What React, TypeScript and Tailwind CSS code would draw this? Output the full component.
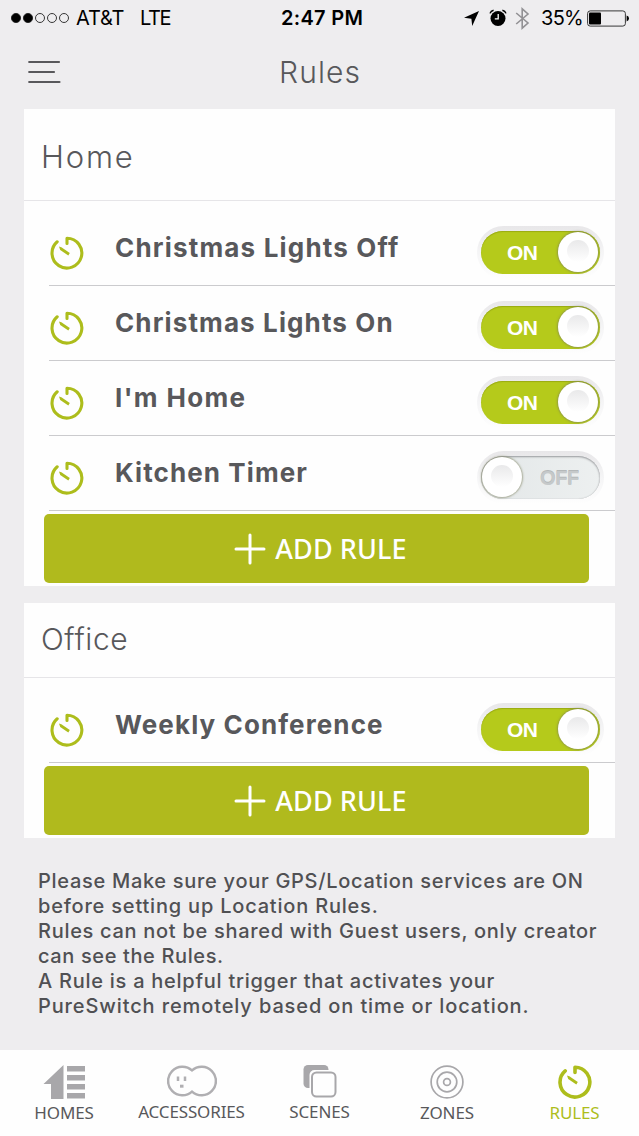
import type { ReactNode } from 'react'

const homeRules = [
  { name: 'Christmas Lights Off', on: true, spacing: 'tracking-[1.18px]' },
  { name: 'Christmas Lights On', on: true, spacing: 'tracking-[1.12px]' },
  { name: "I'm Home", on: true, spacing: 'tracking-[1.35px]' },
  { name: 'Kitchen Timer', on: false, spacing: 'tracking-[1.1px]' },
]

const officeRules = [
  { name: 'Weekly Conference', on: true, spacing: 'tracking-[1.1px]' },
]

const notes = [
  { text: 'Please Make sure your GPS/Location services are ON', spacing: 'tracking-[0.7px]' },
  { text: 'before setting up Location Rules.', spacing: 'tracking-[0.8px]' },
  { text: 'Rules can not be shared with Guest users, only creator', spacing: 'tracking-[0.7px]' },
  { text: 'can see the Rules.', spacing: 'tracking-[0.62px]' },
  { text: 'A Rule is a helpful trigger that activates your', spacing: 'tracking-[0.74px]' },
  { text: 'PureSwitch remotely based on time or location.', spacing: 'tracking-[0.88px]' },
]

function TimerIcon({ strokeWidth = 3.1 }: { strokeWidth?: number }) {
  return (
    <svg width="34" height="34" viewBox="0 0 34 34" fill="none" stroke="#adbd1c" strokeWidth={strokeWidth}>
      <path d="M17 7.4V2.2A14.9 14.9 0 1 1 7.2 5.8" strokeLinejoin="round" strokeLinecap="round" />
      <path d="M9 10.4L11.4 11.2L19.8 17.1L18.3 19.6L10.2 14Z" fill="#adbd1c" stroke="none" />
    </svg>
  )
}

function StatusBar() {
  return (
    <div className="grid h-9 grid-cols-[281px_83px_1fr] items-center font-[Inter] text-[20px] text-black">
      <div className="flex items-center pl-[11px]">
        <svg width="59" height="12" viewBox="0 0 59 12" fill="none" stroke="#222" strokeWidth="0.9">
          <circle cx="5" cy="6" r="4.6" fill="#000" />
          <circle cx="17" cy="6" r="4.6" fill="#000" />
          <circle cx="29" cy="6" r="4.5" />
          <circle cx="41" cy="6" r="4.5" />
          <circle cx="53" cy="6" r="4.5" />
        </svg>
        <span className="ml-1.5 w-16 tracking-[-0.2px] whitespace-nowrap">AT&amp;T</span>
        <span className="tracking-[-1.4px]">LTE</span>
      </div>
      <span className="font-semibold tracking-[0.3px] whitespace-nowrap">2:47 PM</span>
      <div className="flex items-center pl-[99px]">
        <svg width="17" height="17" viewBox="0 0 17 17">
          <path d="M16 1L9.2 16L8.4 8.7L1 7.8Z" fill="#000" />
        </svg>
        <svg className="ml-[9px]" width="18" height="18" viewBox="0 0 18 18">
          <circle cx="9" cy="9.5" r="7.5" fill="#000" />
          <path d="M1 4.4Q1.8 1.8 4.6 1.2M13.4 1.2Q16.2 1.8 17 4.4" fill="none" stroke="#000" strokeWidth="1.4" />
          <path d="M9.2 5V9.8H5.8" fill="none" stroke="#fff" strokeWidth="1.3" />
        </svg>
        <svg className="ml-2" width="15" height="23" viewBox="0 0 15 23" fill="none" stroke="#929194" strokeWidth="1.6">
          <path d="M1.2 6L13 16L7.2 21.2V1.8L13 7L1.2 17" />
        </svg>
        <span className="ml-[11px] w-[46px] tracking-[-0.7px]">35%</span>
        <svg width="42" height="17" viewBox="0 0 42 17">
          <rect x="0.6" y="0.9" width="37.8" height="15.2" rx="2.6" fill="none" stroke="#222" strokeWidth="0.9" />
          <rect x="2" y="2.4" width="12" height="12.2" rx="1" fill="#000" />
          <path d="M39.6 5.6Q42 6.2 42 8.5T39.6 11.4Z" fill="#000" />
        </svg>
      </div>
    </div>
  )
}

function Toggle({ on }: { on: boolean }) {
  return (
    <div className="h-[53px] w-[127px] rounded-full bg-gradient-to-b from-[#e8e7e9] via-[#f5f5f6] to-[#fefefe] p-1 pt-[5px]">
      <div
        className={
          on
            ? 'flex h-[43px] items-center justify-between rounded-full bg-[#b5ca1b] pr-[2px] pl-[26px] shadow-[inset_0_1px_1px_#99ab12]'
            : 'flex h-[43px] flex-row-reverse items-center justify-between rounded-full bg-gradient-to-r from-[#e3e7e8] to-[#edf0f0] pr-[21px] pl-[1px] shadow-[inset_0_1px_2px_#999b9e,inset_0_0_1px_#b9bbbd]'
        }
      >
        <span
          className={
            on
              ? "pt-px font-['Liberation_Sans'] text-[21px] font-bold tracking-[-0.6px] text-white"
              : "pt-px font-['Liberation_Sans'] text-[20px] font-bold tracking-[-0.3px] text-[#c5c9ca] [text-shadow:0_-1px_0_#b4b8b9]"
          }
        >
          {on ? 'ON' : 'OFF'}
        </span>
        <div className="mb-px flex size-10 justify-center rounded-full bg-white pt-2 shadow-[0_0_2px_1px_#7c7f5e99]">
          <div className="size-[22px] rounded-full bg-gradient-to-b from-[#e9e9ea] to-white" />
        </div>
      </div>
    </div>
  )
}

function RuleRow({ name, on, spacing }: { name: string, on: boolean, spacing: string }) {
  return (
    <div className="ml-[25px] flex h-[75px] items-center border-b border-[#cbcbce] pr-[11px]">
      <div className="w-[66px] pt-[9px] pl-px">
        <TimerIcon />
      </div>
      <span className={`flex-1 pb-px text-[26px] font-bold whitespace-nowrap text-[#58585b] ${spacing}`}>{name}</span>
      <div className="pt-[8px]">
        <Toggle on={on} />
      </div>
    </div>
  )
}

function AddRuleButton() {
  return (
    <button className="mt-[3px] mb-[3px] ml-5 flex h-[69px] w-[545px] items-center justify-center gap-[9px] rounded-[5px] bg-[#b0ba1d] pl-[8px] font-['Noto_Sans'] text-[27px] font-medium text-white">
      <svg width="32" height="32" viewBox="0 0 32 32" stroke="#fff" strokeWidth="3" strokeLinecap="round">
        <path d="M16 2V30M2 16H30" />
      </svg>
      <span className="pt-[2px] tracking-[0.1px] whitespace-nowrap">ADD RULE</span>
    </button>
  )
}

function RuleCard({ header, rules }: { header: ReactNode, rules: typeof homeRules }) {
  return (
    <section className="mx-6 bg-[#fefefe]">
      {header}
      <div className="pt-[10px]">
        {rules.map((rule) => (
          <RuleRow key={rule.name} {...rule} />
        ))}
      </div>
      <AddRuleButton />
    </section>
  )
}

function Tab({ label, icon, className = '' }: { label: string, icon: ReactNode, className?: string }) {
  return (
    <div className={`flex flex-col items-center ${className}`}>
      <div className="flex h-[37px] items-center">{icon}</div>
      <span className="mt-px text-[17px] leading-[23px]">{label}</span>
    </div>
  )
}

function TabBar() {
  return (
    <nav className="mt-auto grid h-[86px] grid-cols-[128px_127px_129px_126px_129px] bg-[#fefefe] pt-[13px] font-['Noto_Sans'] tracking-[-0.15px] text-[#58585b]">
      <Tab
        label="HOMES"
        icon={
          <svg width="42" height="36" viewBox="0 0 42 36" fill="#a8a7aa">
            <path d="M20.5 1V35H8V20H0.5Z" />
            <path d="M24 2H42V7.5H24ZM24 11H42V16.5H24ZM24 20H42V25.5H24ZM24 29H42V34.5H24Z" />
          </svg>
        }
      />
      <Tab
        label="ACCESSORIES"
        className="-mt-px"
        icon={
          <svg width="50" height="32" viewBox="0 0 50 32" fill="none" stroke="#b0afb2" strokeWidth="2.5">
            <path d="M25 5.4A14.3 14.3 0 1 0 25 26.6A14.3 14.3 0 1 0 25 5.4Z" />
            <path d="M11 11.5V16M18 11.5V16" />
            <path d="M13 21.2H16.5" strokeWidth="3" />
          </svg>
        }
      />
      <Tab
        label="SCENES"
        className="-mt-px"
        icon={
          <svg width="34" height="34" viewBox="0 0 34 34">
            <rect x="0.5" y="1" width="25" height="23" rx="4.5" fill="#a8a7aa" />
            <rect x="6.5" y="6" width="28" height="28" rx="5" fill="#fefefe" />
            <rect x="9" y="8.5" width="23.5" height="24" rx="4.5" fill="#fefefe" stroke="#a8a7aa" strokeWidth="2" />
          </svg>
        }
      />
      <Tab
        label="ZONES"
        icon={
          <svg width="34" height="34" viewBox="0 0 34 34" fill="none" stroke="#a8a7aa" strokeWidth="1.7">
            <circle cx="17" cy="17" r="15.9" />
            <circle cx="17" cy="17" r="9.8" />
            <circle cx="17" cy="17" r="3.4" />
          </svg>
        }
      />
      <Tab label="RULES" className="text-[#adbd1c]" icon={<TimerIcon strokeWidth={3.6} />} />
    </nav>
  )
}

export default function App() {
  return (
    <div className="flex h-[1136px] w-[639px] flex-col overflow-hidden bg-[#eeedef] font-[Inter,sans-serif]">
      <StatusBar />
      <header className="grid h-[73px] grid-cols-[279px_1fr] pt-[18px] text-[#58585b]">
        <svg className="mt-[5px] ml-7" width="33" height="26" viewBox="0 0 33 26" stroke="#58585b" strokeWidth="2.2" strokeLinecap="round">
          <path d="M1.2 3H31M1.2 13H26M1.2 23H31.5" />
        </svg>
        <h1 className="text-[30px] leading-9 font-light tracking-[1.1px]">Rules</h1>
      </header>
      <RuleCard
        rules={homeRules}
        header={
          <h2 className="flex h-[92px] items-center border-b border-[#e6e5e8] pt-[5px] pl-[17px] text-[31px] font-light tracking-[1.8px] text-[#58585b]">
            Home
          </h2>
        }
      />
      <div className="h-[17px]" />
      <RuleCard
        rules={officeRules}
        header={
          <h2 className="flex h-[75px] items-center border-b border-[#e6e5e8] pb-[2px] pl-[17px] text-[30px] font-light tracking-[0.6px] text-[#58585b]">
            Office
          </h2>
        }
      />
      <div className="mt-[31px] pl-[38px] text-[20px] leading-[25px] font-medium text-[#505053]">
        {notes.map((note) => (
          <p key={note.text} className={`whitespace-nowrap ${note.spacing}`}>{note.text}</p>
        ))}
      </div>
      <TabBar />
    </div>
  )
}
